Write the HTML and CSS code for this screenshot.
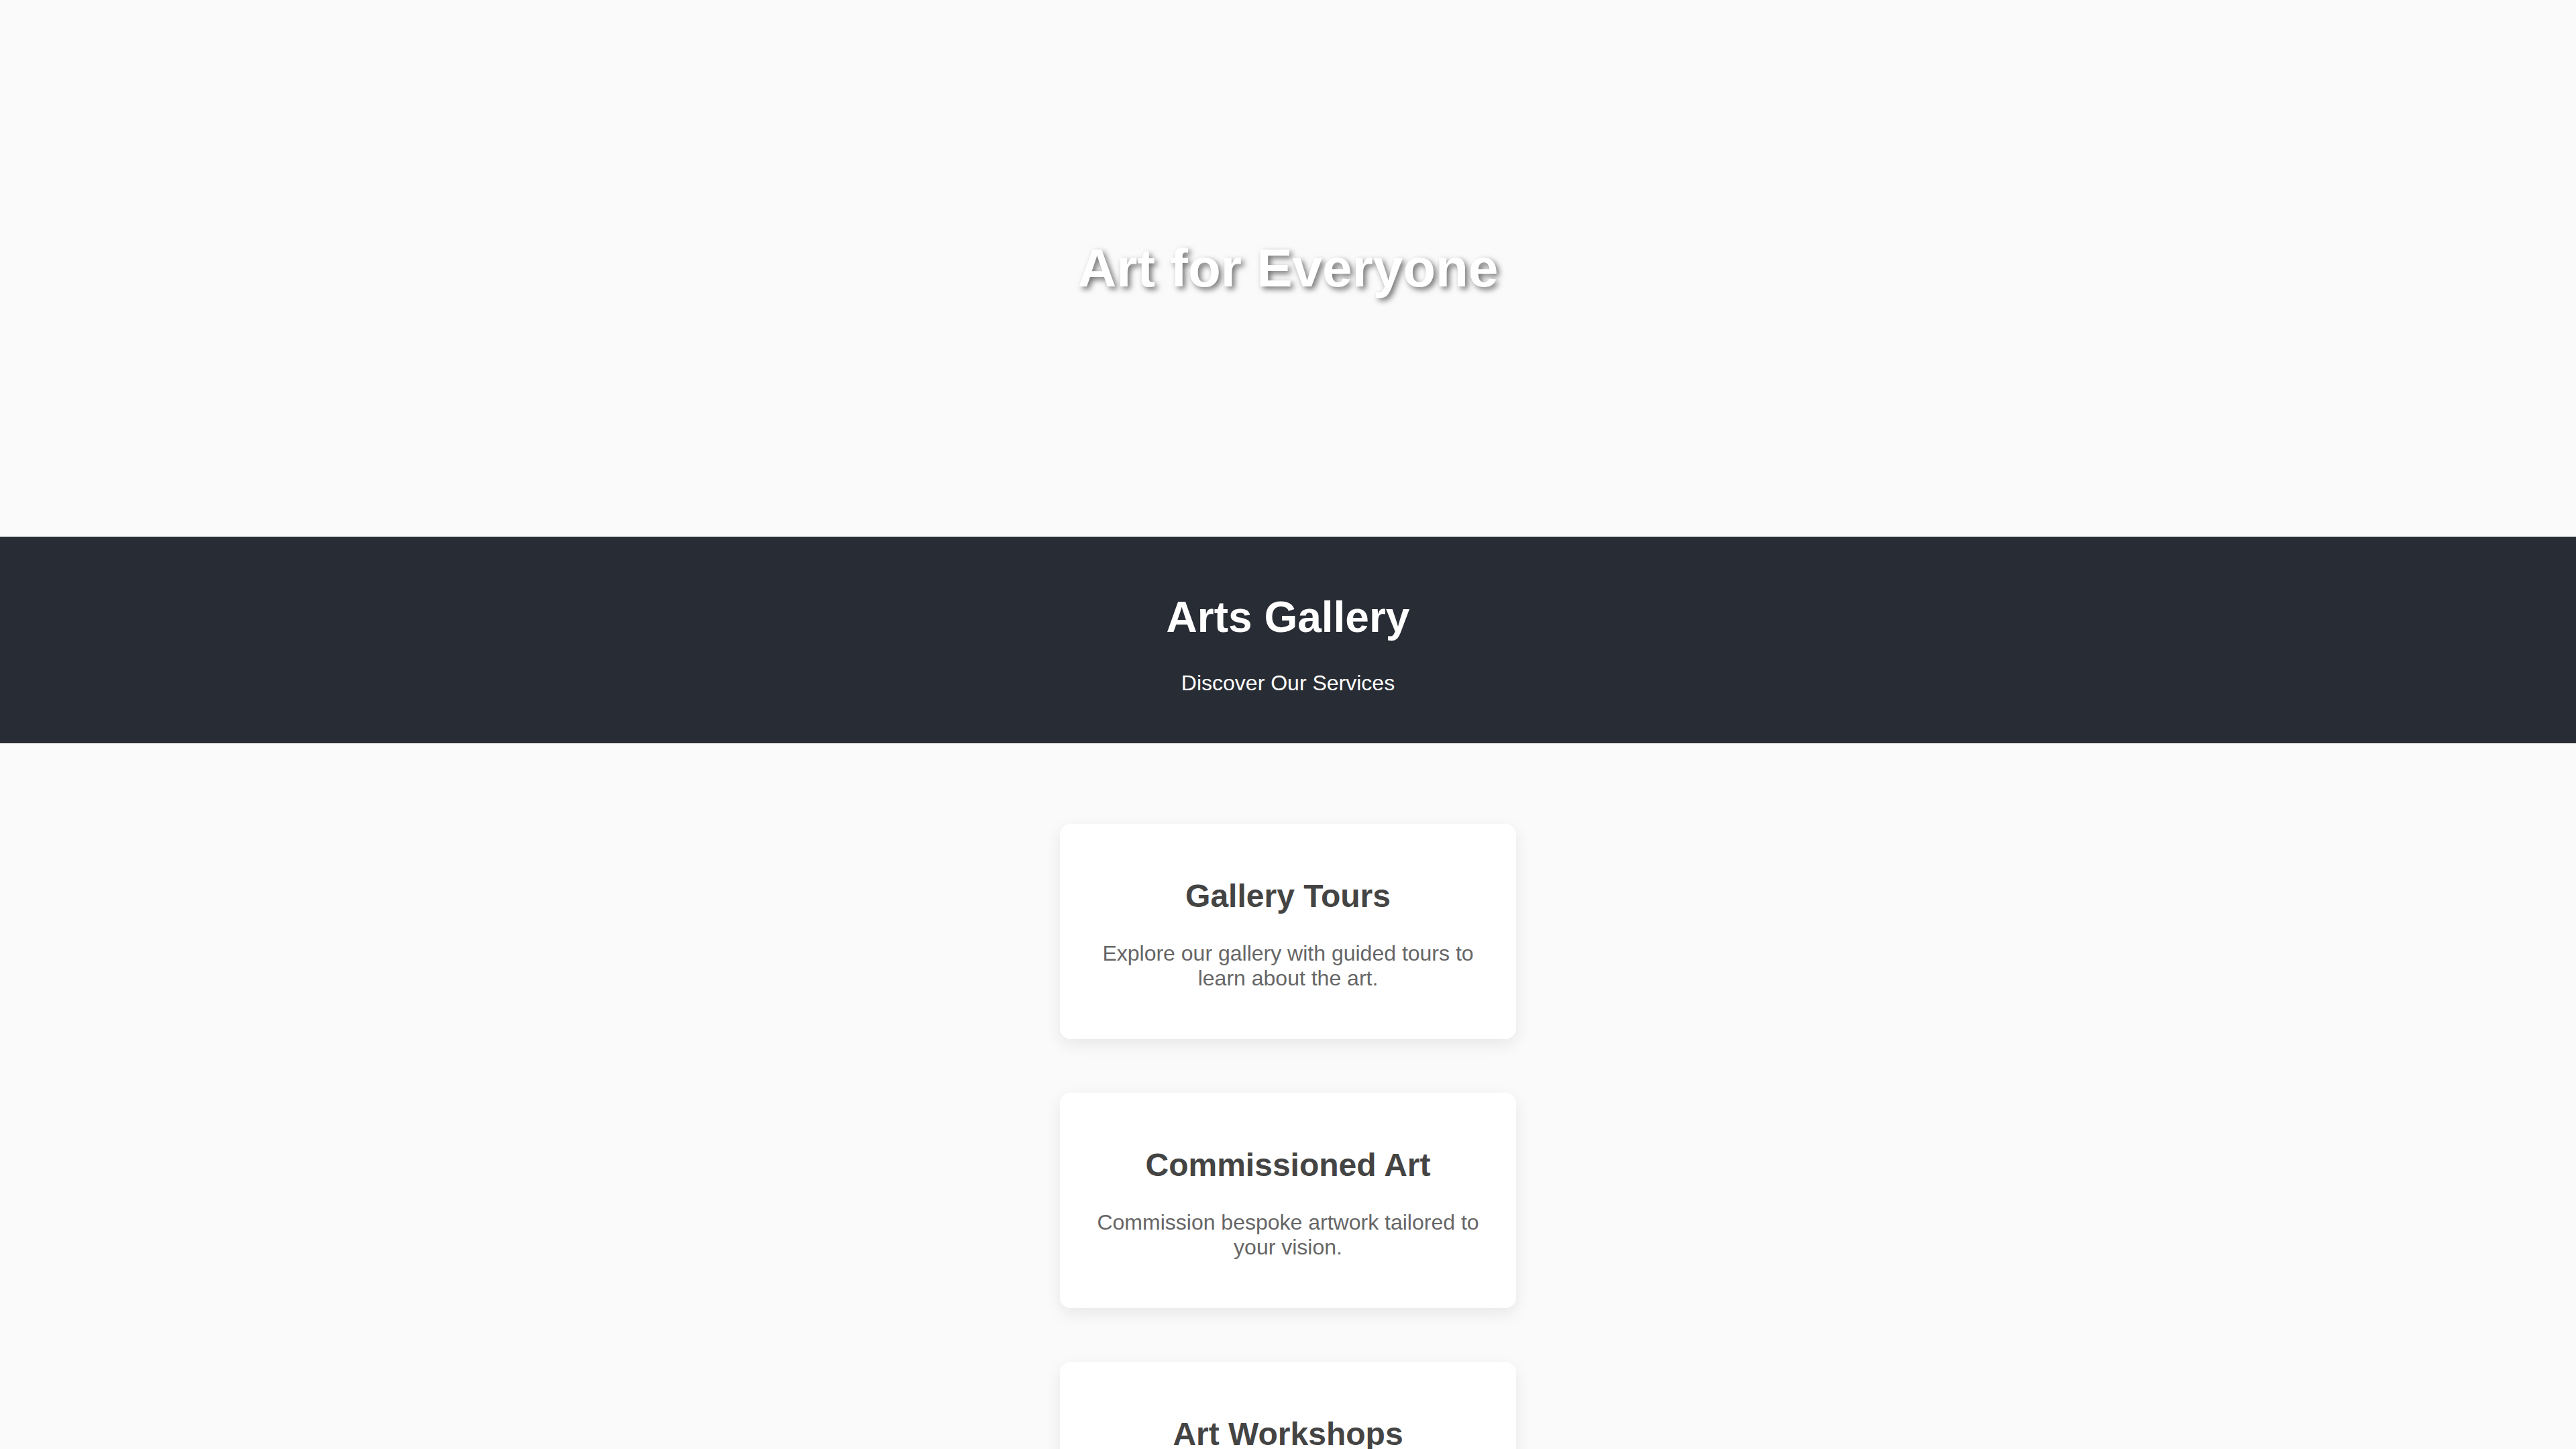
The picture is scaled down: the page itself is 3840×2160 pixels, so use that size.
FILE: index.html
```html
<!DOCTYPE html>
<html lang="en">
<head>
<meta charset="utf-8">
<title>Arts Gallery</title>
<link rel="stylesheet" href="styles.css">
</head>
<body>
  <section class="hero">
    <h1 class="hero-title">Art for Everyone</h1>
  </section>
  <header class="site-header">
    <h1 class="site-title">Arts Gallery</h1>
    <p class="site-sub">Discover Our Services</p>
  </header>
  <main class="services">
    <div class="card">
      <h2 class="card-title">Gallery Tours</h2>
      <p class="card-text">Explore our gallery with guided tours to learn about the art.</p>
    </div>
    <div class="card">
      <h2 class="card-title">Commissioned Art</h2>
      <p class="card-text">Commission bespoke artwork tailored to your vision.</p>
    </div>
    <div class="card">
      <h2 class="card-title">Art Workshops</h2>
      <p class="card-text">Join hands-on workshops to learn new techniques from local artists.</p>
    </div>
  </main>
</body>
</html>
```

FILE: styles.css
```css
html, body {
  margin: 0;
  padding: 0;
}
body {
  background: #fafafa;
  font-family: "Liberation Sans", Arial, Helvetica, sans-serif;
  color: #333;
}
.hero {
  height: 800px;
  display: flex;
  align-items: center;
  justify-content: center;
  background: #fafafa;
}
.hero-title {
  margin: 0;
  font-size: 80px;
  font-weight: bold;
  color: #fff;
  text-shadow: 4px 4px 8px rgba(0, 0, 0, 0.55);
}
.site-header {
  background: #282c34;
  color: #fff;
  text-align: center;
  padding: 40px;
}
.site-title {
  margin: 43px 0;
  font-size: 64px;
  line-height: 74px;
  font-weight: bold;
}
.site-sub {
  margin: 32px 0;
  font-size: 32px;
  line-height: 36px;
}
.services {
  display: flex;
  flex-direction: column;
  align-items: center;
  gap: 80px;
  padding: 120px 0 80px;
}
.card {
  width: 600px;
  padding: 40px;
  background: #fff;
  border-radius: 16px;
  box-shadow: 0 8px 24px rgba(0, 0, 0, 0.08);
  text-align: center;
}
.card-title {
  margin: 40px 0;
  font-size: 48px;
  line-height: 55px;
  font-weight: bold;
  color: #444;
}
.card-text {
  margin: 0 0 32px;
  font-size: 32px;
  line-height: 37px;
  color: #666;
}
```
